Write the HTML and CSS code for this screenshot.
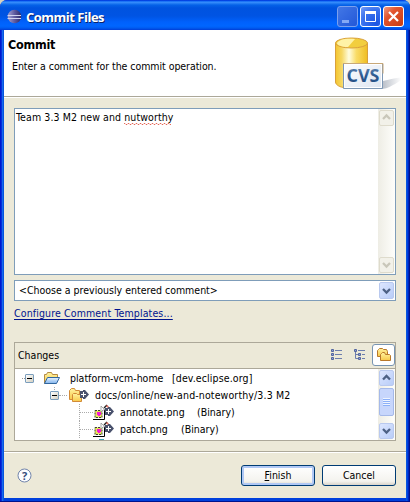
FILE: index.html
```html
<!DOCTYPE html>
<html lang="en">
<head>
<meta charset="utf-8">
<title>Commit Files</title>
<link rel="stylesheet" href="styles.css">
</head>
<body>
<svg width="0" height="0" class="defs" aria-hidden="true">
  <defs>
    <linearGradient id="gold" x1="0" x2="1"><stop offset="0" stop-color="#f4c52f"/><stop offset=".2" stop-color="#f6d864"/><stop offset=".42" stop-color="#fffde0"/><stop offset=".65" stop-color="#f9dc66"/><stop offset="1" stop-color="#efbd21"/></linearGradient>
    <linearGradient id="card" x1="0" y1="0" x2="1" y2="1"><stop offset="0" stop-color="#fff"/><stop offset="1" stop-color="#dce4f0"/></linearGradient>
    <linearGradient id="cvs" x1="0" y1="0" x2="0" y2="1"><stop offset="0" stop-color="#6f91b8"/><stop offset=".5" stop-color="#2d5a91"/><stop offset="1" stop-color="#204a80"/></linearGradient>
    <linearGradient id="shadow" x1="0" x2="1"><stop offset="0" stop-color="#b4bac4"/><stop offset="1" stop-color="#fff"/></linearGradient>
    <linearGradient id="folder" x1="0" y1="0" x2="0" y2="1"><stop offset="0" stop-color="#fff3a0"/><stop offset="1" stop-color="#f8c94a"/></linearGradient>
    <linearGradient id="open" x1="0" y1="0" x2="0" y2="1"><stop offset="0" stop-color="#e8f3ff"/><stop offset="1" stop-color="#82b4ed"/></linearGradient>
    <linearGradient id="globe" x1="0" y1="0" x2="1" y2="0"><stop offset="0" stop-color="#a4a1d3"/><stop offset=".5" stop-color="#5f5ba0"/><stop offset="1" stop-color="#2c2867"/></linearGradient>
    <g id="plus"><path d="M0 1h3V0h2l4 4.500L5 9H3V8H0z" fill="#4a526d"/><path d="M1 4.500h5M3.500 2v5" stroke="#fff"/></g>
    <g id="image"><path d="M0 15.500h11.500V6" fill="none" stroke="#000"/><path d="M0 5h10v10H0z" fill="#fff"/><path d="M2 6.500h7v7H2z" fill="#e8e45a" stroke="#3d4530" stroke-dasharray="2 1"/><path d="M4 8h4v3H7v1H5v-1H4z" fill="#f416d5"/><path d="M8 2v6l2-2h2z" fill="#fff" stroke="#888" stroke-width=".7"/><path d="M11 4l3-3" stroke="#222" stroke-width="1.500"/><path d="M13 2h2v2" fill="none" stroke="#d44a3a"/></g>
  </defs>
</svg>
<div class="window">
  <header class="titlebar">
    <svg class="logo" width="15" height="15" viewBox="0 0 15 15"><circle cx="7.500" cy="7.500" r="6.800" fill="url(#globe)"/><path d="M.500 6.500h13.500M.500 9.500h13.500" stroke="#d2d4ef"/></svg>
    <h1>Commit Files</h1>
    <div class="controls">
      <button class="ctl min" aria-label="Minimize"><svg width="19" height="19"><path d="M4 13h7v3H4z" fill="#84a9f5"/></svg></button>
      <button class="ctl max" aria-label="Maximize"><svg width="19" height="19"><path d="M4.500 5v9.500h10V5" fill="none" stroke="#fff"/><path d="M4 4h11v3H4z" fill="#fff"/></svg></button>
      <button class="ctl close" aria-label="Close"><svg width="19" height="19"><path d="M5 5l9 9M14 5l-9 9" stroke="#fff" stroke-width="2.200"/></svg></button>
    </div>
  </header>
  <section class="banner">
    <div class="intro"><h2>Commit</h2><p>Enter a comment for the commit operation.</p></div>
    <svg class="cvs-art" width="70" height="56" viewBox="0 0 70 56">
      <path d="M49 44c7-1 13-4 18-3 2 1-2 4-8 7-5 3-9 4-12 4z" fill="url(#shadow)"/>
      <path d="M1.500 6v39c0 3 5 5.500 9 5.500h23V6z" fill="url(#gold)" stroke="#d9a03b"/>
      <ellipse cx="17.500" cy="6" rx="16" ry="5" fill="#f2ce3e" stroke="#d9a03b"/><path d="M3 6c2-4 10-5 18-4l-7 8C7 10 3 8 3 6" fill="#fff3a7"/>
      <path d="M9.500 26.500h39v25h-39z" fill="url(#card)" stroke="#7e98b5"/><path d="M9 26.500h40v10" fill="none" stroke="#c8a878"/><path d="M10.500 27.500h37v23h-37z" fill="none" stroke="#fff"/>
      <text x="12.500" y="45" textLength="33" lengthAdjust="spacingAndGlyphs" class="cvs-text" fill="url(#cvs)">CVS</text>
    </svg>
  </section>
  <main class="body">
    <div class="comment">
      <div class="comment-text">Team 3.3 M2 new and <span class="typo">nutworthy<svg width="50" height="3"><path d="M0 .500h1l1 1h1l1-1h1l1 1h1l1-1h1l1 1h1l1-1h1l1 1h1l1-1h1l1 1h1l1-1h1l1 1h1l1-1h1l1 1h1l1-1h1l1 1h1l1-1h1l1 1h1l1-1h1l1 1h1l1-1h1l1 1h1l1-1h1l1 1h1" fill="none" stroke="#e05040" stroke-width=".8"/></svg></span></div>
      <div class="scroll disabled"><span class="arrow"><svg width="15" height="15"><path d="M4 9l3.500-3.500L11 9" /></svg></span><span class="arrow"><svg width="15" height="15"><path d="M4 6l3.500 3.500L11 6" /></svg></span></div>
    </div>
    <div class="combo"><span>&lt;Choose a previously entered comment&gt;</span><i class="arrow drop"><svg width="15" height="17"><path d="M4 7l3.500 3.500L11 7"/></svg></i></div>
    <a class="templates">Configure Comment Templates...</a>
    <section class="changes">
      <div class="changes-head"><span>Changes</span>
        <div class="tools">
          <svg width="12" height="12"><path d="M.500.500h2v2h-2zM.500 4.500h2v2h-2zM.500 8.500h2v2h-2z" fill="#8e9ed1" stroke="#53669f"/><path d="M4 1.500h7M4 5.500h7M4 9.500h7" stroke="#6d7ead"/></svg>
          <svg width="12" height="12"><path d="M.500.500h2v2h-2zM4.500 4.500h2v2h-2zM4.500 8.500h2v2h-2z" fill="#8e9ed1" stroke="#53669f"/><path d="M4 1.500h7M8 5.500h3M8 9.500h3M1.500 3v6.500H4M2 5.500h2" fill="none" stroke="#6d7ead"/></svg>
          <span class="active"><svg width="16" height="16"><path d="M1.500 9.500v-6l1-1 1-1h3l1 1h3l1 2v5z" fill="url(#folder)" stroke="#b9782a"/><path d="M4.500 13.500v-6l1-1 1-1h2l1 2h4l1 1v5z" fill="url(#folder)" stroke="#b9782a"/></svg></span>
        </div>
      </div>
      <div class="tree-wrap">
        <div class="tree">
          <div class="row r1"><i class="stub"></i><i class="toggle"></i><svg class="open-folder" width="17" height="15"><path d="M1.500 12.500v-9h2l1-2h4l1 2h5v5" fill="url(#folder)" stroke="#b48a43"/><path d="M1.500 12.500l3-6h12l-3 6z" fill="url(#open)" stroke="#31679f"/></svg><span class="label home">platform-vcm-home</span><span class="label host">[dev.eclipse.org]</span></div>
          <div class="row r2"><i class="toggle"></i><i class="connector"></i><svg class="folder-add" width="20" height="15"><path d="M.500 11.500v-9l2-2h3l1 2h4v9z" fill="url(#folder)" stroke="#d28a37"/><path d="M3.500 13.500v-7l1-1h3l1 1h4v7z" fill="url(#folder)" stroke="#d28a37"/><use href="#plus" x="11" y="2"/></svg><span class="label docs">docs/online/new-and-noteworthy/3.3 M2</span></div>
          <div class="row r3"><i class="branch"></i><svg width="21" height="17"><use href="#image"/><use href="#plus" x="12" y="3"/></svg><span class="label annotate">annotate.png</span><span class="label binary">(Binary)</span></div>
          <div class="row r3"><i class="branch"></i><svg width="21" height="17"><use href="#image"/><use href="#plus" x="12" y="3"/></svg><span class="label patch">patch.png</span><span class="label binary">(Binary)</span></div>
          <div class="peek"></div>
        </div>
        <div class="scroll"><span class="arrow"><svg width="15" height="15"><path d="M4 9.500L7.500 6 11 9.500"/></svg></span><span class="thumb"></span><span class="arrow last"><svg width="15" height="15"><path d="M4 6l3.500 3.500L11 6"/></svg></span></div>
      </div>
    </section>
  </main>
  <footer class="footer">
    <svg class="help" width="15" height="15"><circle cx="7.500" cy="7.500" r="6.500" fill="#fcfdff" stroke="#7184aa"/><text x="7.500" y="11.500" text-anchor="middle">?</text></svg>
    <button class="btn primary"><span class="finish"><u>F</u>inish</span></button>
    <button class="btn"><span class="cancel">Cancel</span></button>
  </footer>
</div>
</body>
</html>
```
FILE: styles.css
```css
* { box-sizing: border-box; }
body { margin: 0; width: 410px; height: 502px; overflow: hidden; background: #d7d2be; font: 10.5px/17px "DejaVu Sans Condensed", "DejaVu Sans", sans-serif; font-stretch: condensed; color: #000; }
.defs { position: absolute; }
svg { display: block; flex: none; }
h1, h2, p { margin: 0; }
button { padding: 0; font: inherit; }
.window { width: 410px; height: 502px; display: flex; flex-direction: column; padding: 0 4px 4px; border-radius: 7px 7px 0 0; background: linear-gradient(90deg, #0019cf 0 1px, #0831d9 1px 2px, #166aee 2px 3px, #0855dd 3px 4px, #0040dc 4px 406px, #0855dd 406px 407px, #0042e0 407px 408px, #0025bc 408px 409px, #00138c 409px); box-shadow: inset 0 -1px #00138c; overflow: hidden; }
.titlebar { height: 30px; flex: none; margin: 0 -4px; padding: 3px 6px 0 7px; display: flex; align-items: center; color: #fff; background: linear-gradient(#0831d9 0, #0058ee 1px, #3b91ff 2px, #2a83f6 3px, #0562e8 5px, #0053df 8px, #0054e3 16px, #0061fc 22px, #0066ff 26px, #005bf0 28px, #003dd7 30px); }
.titlebar h1 { margin-left: 4px; font: bold 13px/20px "Open Sans", sans-serif; white-space: nowrap; letter-spacing: -.5px; text-shadow: 1px 1px #0a246a; }
.controls { display: flex; gap: 2px; margin-left: auto; }
.ctl { width: 21px; height: 21px; border: 1px solid #fff; border-radius: 3px; color: #fff; background: radial-gradient(circle at 80% 85%, #1c55e2, #3971ee 60%, #789df5); }
.min { border-color: #7ba0ee; background: linear-gradient(135deg, #4277e6, #2358d8); }
.close { background: linear-gradient(135deg, #ef9b82, #e3552f 35%, #c73c12); }
.banner { height: 68px; flex: none; display: flex; background: #fff; border-bottom: 1px solid #fff; box-shadow: inset 0 -1px #aca899; }
.intro { width: 325px; padding: 6px 0 0 4px; }
.intro h2 { font-size: 12.5px; line-height: 18px; font-weight: bold; letter-spacing: -.25px; }
.intro p { margin: 4px 0 0 4px; white-space: nowrap; letter-spacing: -.05px; }
.cvs-art { margin: 7px 0 0 5px; }
.cvs-text { font: bold 17px "Open Sans", sans-serif; }
.body { height: 354px; flex: none; padding: 10px 10px 0; display: flex; flex-direction: column; background: #ece9d8; border-bottom: 1px solid #aca899; }
.comment { height: 167px; flex: none; display: flex; border: 1px solid #7f9db9; background: #fff; }
.comment-text { flex: 1; padding: 0 0 0 1px; letter-spacing: .1px; white-space: pre; }
.typo { position: relative; }
.typo svg { position: absolute; left: 0; top: 12px; }
.scroll { width: 17px; display: flex; flex-direction: column; background: linear-gradient(90deg, #eeede5, #fefefb); padding: 1px; }
.disabled { justify-content: space-between; }
.arrow { width: 15px; height: 16px; flex: none; border-radius: 2px; background: linear-gradient(135deg, #dce6ff, #b9cdf8); border: 1px solid #b9c9ef; }
.arrow svg { margin: -1px; }
.arrow path { fill: none; stroke: #4d6185; stroke-width: 2.3; }
.disabled .arrow { background: #f2f1e9; border-color: #dedbcc; }
.disabled .arrow path { stroke: #c9c7ba; }
.combo { height: 21px; flex: none; margin-top: 5px; display: flex; align-items: center; border: 1px solid #7f9db9; background: #fff; padding: 0 1px 0 4px; white-space: nowrap; }
.combo .arrow { margin-left: auto; height: 17px; }
.templates { margin-top: 4px; align-self: flex-start; color: #00148e; text-decoration: underline; text-underline-offset: 2px; white-space: nowrap; letter-spacing: .13px; }
.changes { margin-top: 20px; height: 99px; flex: none; border: 1px solid #aca899; }
.changes-head { height: 26px; display: flex; align-items: center; justify-content: space-between; padding-left: 3px; border-bottom: 1px solid #aca899; }
.tools { display: flex; align-items: center; gap: 11px; margin-top: -1px; }
.active { width: 23px; height: 22px; margin: -1px 0 0 -5px; padding: 2px 3px; background: #fff; border: 1px solid #7895b2; border-radius: 3px; }
.tree-wrap { height: 71px; display: flex; background: #fff; }
.tree { width: 364px; height: 71px; overflow: hidden; }
.row { height: 17px; display: flex; align-items: center; white-space: nowrap; }
.r1 { padding-left: 7px; margin-top: 1px; }
.stub { width: 3px; border-top: 1px dotted #999; }
.toggle { width: 9px; height: 9px; border: 1px solid #7b9ebd; border-radius: 1px; background: linear-gradient(#000, #000) center/5px 1px no-repeat, linear-gradient(135deg, #fff, #d4d0c1); }
.open-folder { margin-left: 9px; }
.home { width: 92px; margin-left: 10px; }
.host { margin-left: 10px; letter-spacing: .12px; }
.r2 { padding-left: 35px; background: repeating-linear-gradient(#aaa 0 1px, transparent 1px 2px) 39px 0/1px 4px no-repeat; }
.connector { width: 8px; border-top: 1px dotted #aaa; }
.folder-add { margin-left: 2px; }
.docs { margin-left: 6px; letter-spacing: .13px; }
.r3 { padding-left: 64px; }
.branch { width: 14px; height: 17px; border-left: 1px dotted #aaa; background: repeating-linear-gradient(90deg, #aaa 0 1px, transparent 1px 2px) 0 8px/13px 1px no-repeat; }
.annotate { width: 65px; margin-left: 6px; letter-spacing: .1px; }
.patch { width: 49px; margin-left: 6px; }
.binary { margin-left: 12px; }
.peek { width: 5px; height: 1px; margin: 1px 0 0 84px; background: #45a5b6; }
.thumb { height: 28px; margin: 2px 0; border: 1px solid #a5b9e9; border-radius: 2px; background: repeating-linear-gradient(#eef4ff 0 1px, #8cb0f8 1px 2px) center/7px 8px no-repeat, #c7d6fc; }
.last { margin-top: auto; }
.footer { flex: 1; display: flex; align-items: center; background: #ece9d8; box-shadow: inset 0 1px #fff; padding: 1px 10px 0 13px; }
.help text { font: bold 11px "Open Sans", sans-serif; fill: #354d7c; }
.btn { width: 74px; height: 21px; border: 1px solid #003c74; border-radius: 3px; background: linear-gradient(#fff, #f4f3ee 80%, #d9d4ca); margin-left: 7px; line-height: 17px; }
.primary { margin-left: auto; box-shadow: inset 0 0 0 2px #b0c8f5; }
```
